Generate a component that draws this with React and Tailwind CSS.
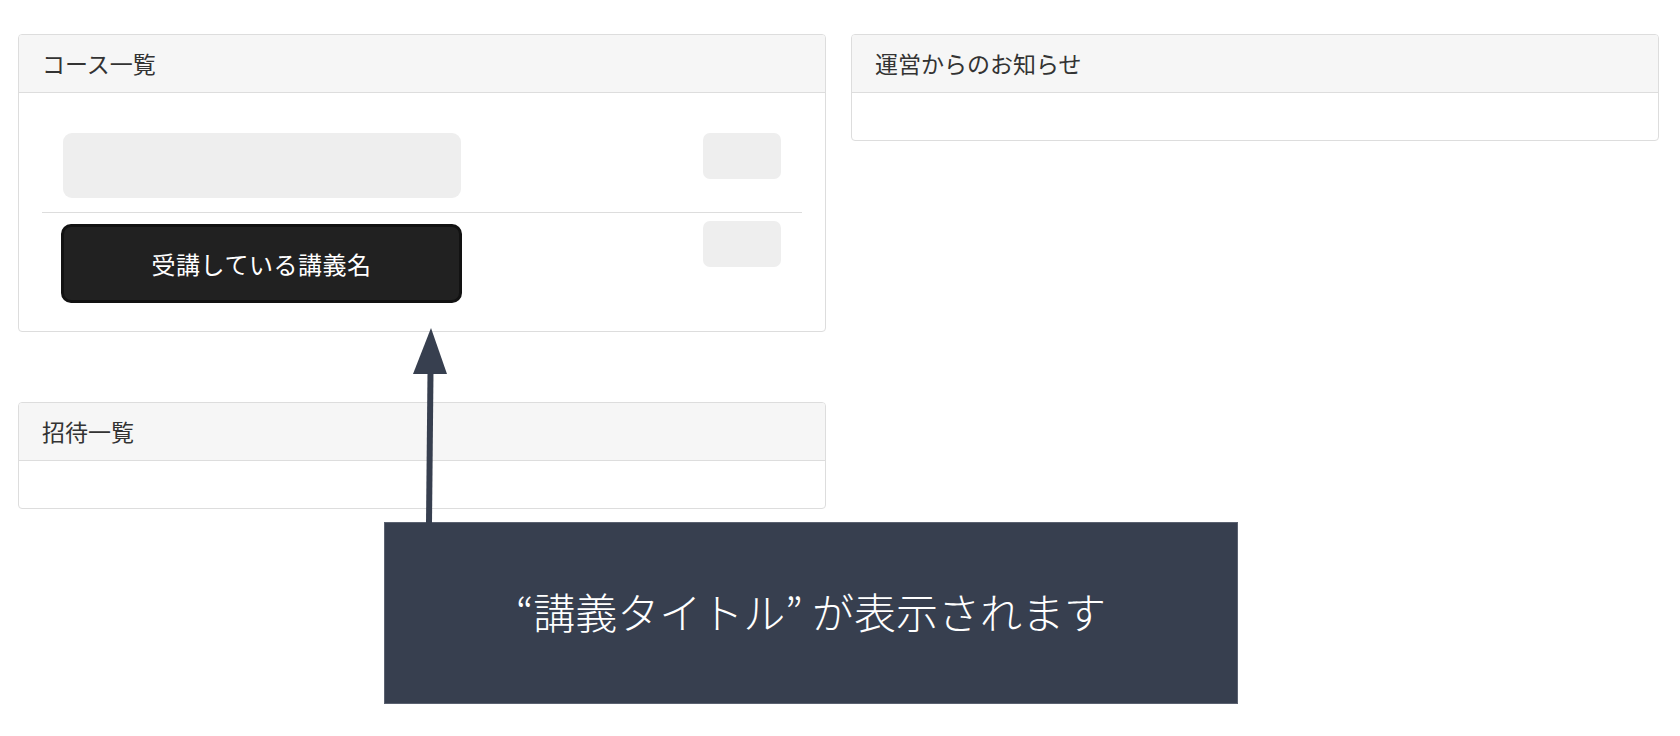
export default function App() {
  return (
    <div
      className="relative min-h-screen bg-white text-[#333]"
      style={{ fontFamily: '"Noto Sans CJK JP", "Noto Sans", sans-serif' }}
    >
      <div className="flex gap-[25px] pl-[18px] pt-[34px]">
        {/* Left column */}
        <div className="w-[808px] flex flex-col gap-[70px]">
          {/* Course list */}
          <div className="border border-[#dddddd] rounded-[4px] overflow-hidden">
            <div className="h-[58px] bg-[#f6f6f6] border-b border-[#dddddd] px-[23px] flex items-center text-[23px]">
              コース一覧
            </div>
            <div className="px-[23px] pt-[40px] pb-[28px]">
              <div className="flex justify-between items-start px-[21px] pb-[14px] border-b border-[#dddddd]">
                <div className="w-[398px] h-[65px] rounded-[9px] bg-[#eeeeee]" />
                <div className="w-[78px] h-[46px] rounded-[7px] bg-[#eeeeee]" />
              </div>
              <div className="flex justify-between items-start pl-[19px] pr-[21px] pt-[8px]">
                <div className="mt-[3px] w-[401px] h-[79px] rounded-[10px] bg-[#212121] border-[3px] border-[#121212] flex items-center justify-center text-white text-[24px] tracking-[0.5px]">
                  受講している講義名
                </div>
                <div className="w-[78px] h-[46px] rounded-[7px] bg-[#eeeeee]" />
              </div>
            </div>
          </div>

          {/* Invitations */}
          <div className="border border-[#dddddd] rounded-[4px] overflow-hidden">
            <div className="h-[58px] bg-[#f6f6f6] border-b border-[#dddddd] px-[23px] flex items-center text-[23px]">
              招待一覧
            </div>
            <div className="h-[47px]" />
          </div>
        </div>

        {/* Right column */}
        <div className="w-[808px]">
          <div className="border border-[#dddddd] rounded-[4px] overflow-hidden">
            <div className="h-[58px] bg-[#f6f6f6] border-b border-[#dddddd] px-[23px] flex items-center text-[23px]">
              運営からのお知らせ
            </div>
            <div className="h-[47px]" />
          </div>
        </div>
      </div>

      {/* Annotation */}
      <div className="ml-[384px] mt-[13px] w-[854px] h-[182px] pb-[6px] bg-[#373f4f] border border-[#5a6170] flex items-center justify-center text-white text-[42px] font-light">
        “講義タイトル” が表示されます
      </div>

      <svg
        className="absolute top-0 left-0 pointer-events-none"
        width="1680"
        height="736"
        viewBox="0 0 1680 736"
      >
        <polygon points="431,328 413,374 447,374" fill="#373f4f" />
        <line x1="430.5" y1="372" x2="429" y2="523" stroke="#373f4f" strokeWidth="6" />
      </svg>
    </div>
  )
}
